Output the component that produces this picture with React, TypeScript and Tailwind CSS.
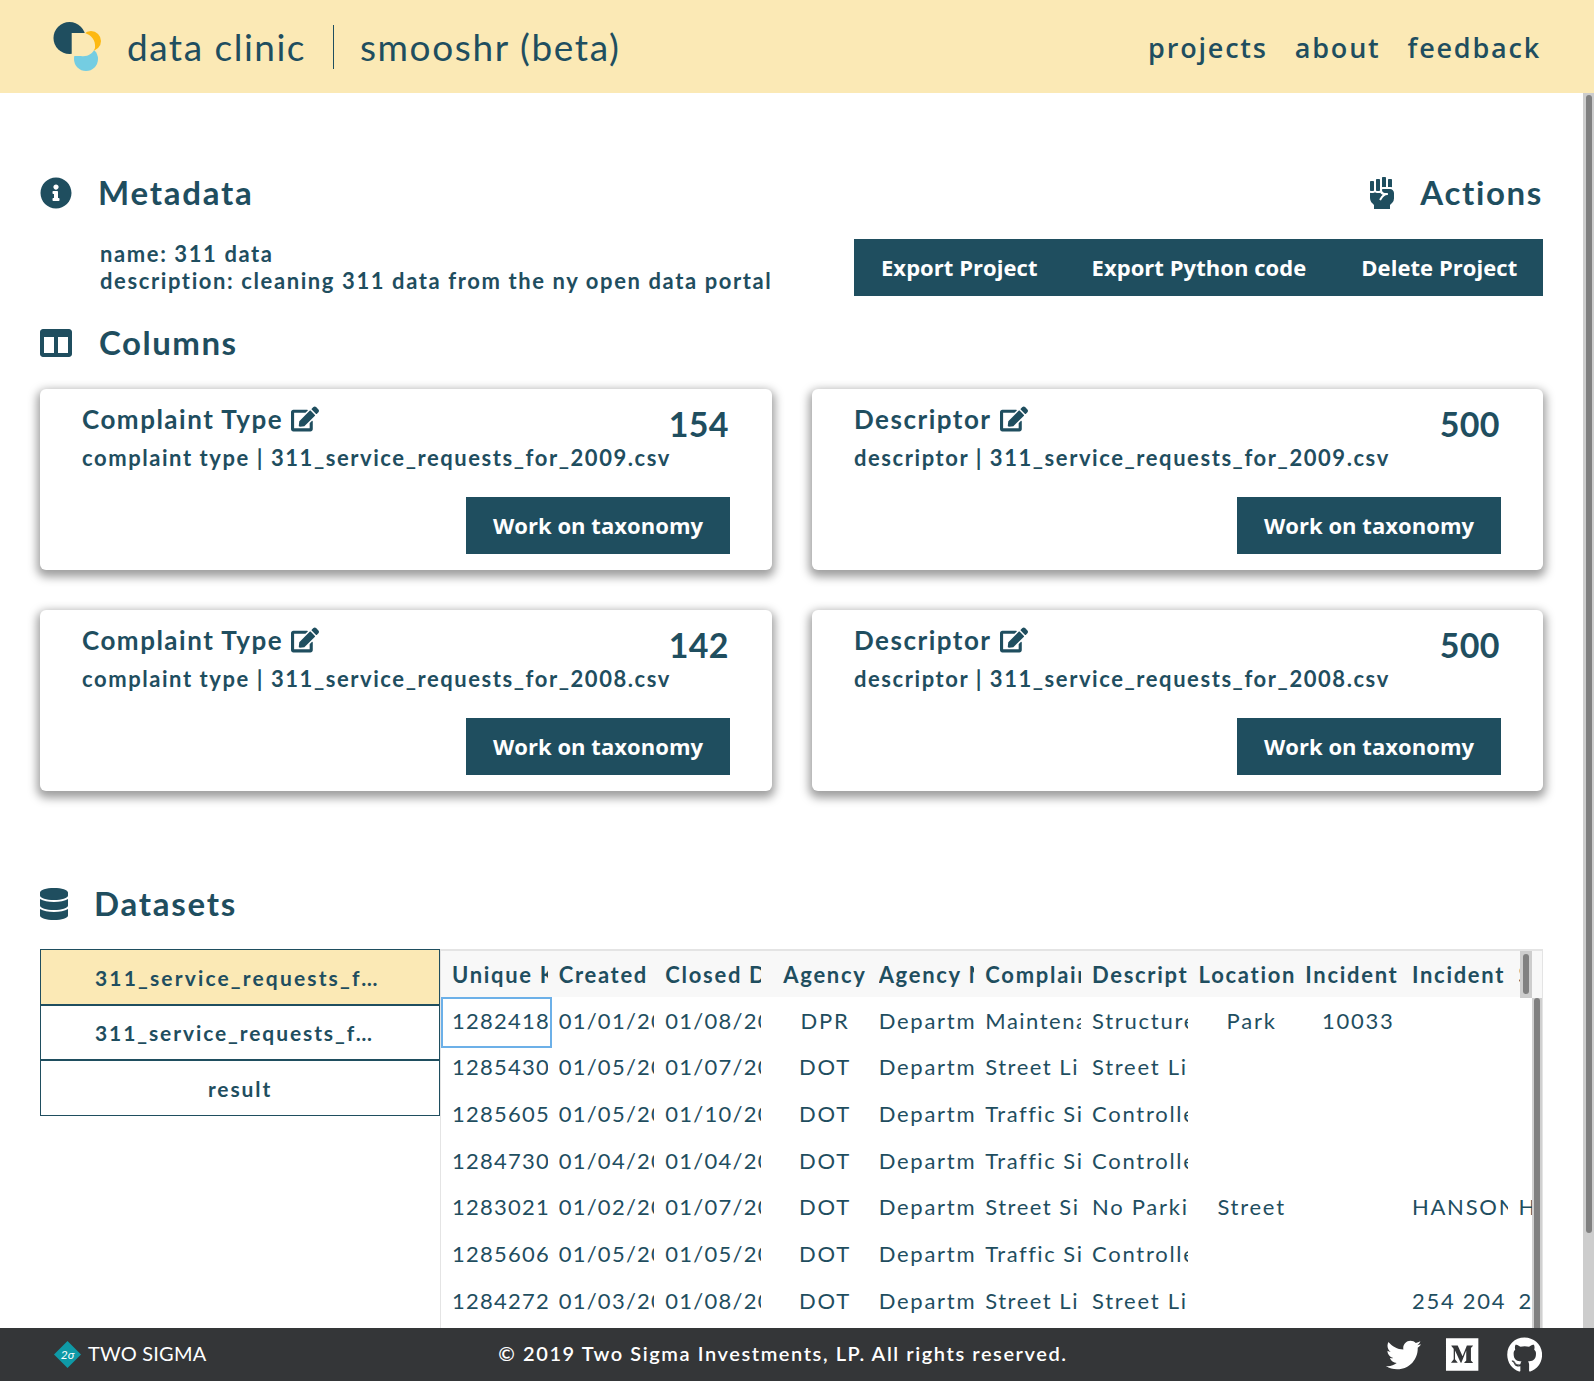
import React from "react";
import { FaInfoCircle, FaColumns, FaDatabase, FaFistRaised, FaEdit, FaTwitter, FaMedium, FaGithub } from "react-icons/fa";

function Logo() {
  return (
    <svg width="52" height="54" viewBox="50 20 52 54" className="shrink-0">
      <circle cx="85" cy="59" r="12" fill="#74cde2" />
      <circle cx="90" cy="41" r="10" fill="#fdb913" />
      <circle cx="68.5" cy="38" r="16" fill="#1f4e5f" />
      <path d="M70.7 33 H84 C90 35 95 40 94 48 C92 54 86 57 80 56 H70.7 Z" fill="#fbe9b5" />
    </svg>
  );
}

function Btn({ children, className = "" }: { children: React.ReactNode; className?: string }) {
  return (
    <div className={`font-['Open_Sans',sans-serif] bg-[#1f4e5f] text-white font-bold text-[22px] tracking-[0.05px] h-[57px] flex items-center ${className}`}>
      {children}
    </div>
  );
}

function Card({ title, count, sub }: { title: string; count: string; sub: string }) {
  return (
    <div className="h-[181px] rounded-md bg-white shadow-[0_4px_10px_3px_rgba(0,0,0,0.38)] pl-[42px] pr-[42px] flex flex-col">
      <div className="flex justify-between items-start h-[63px]">
        <div className="flex items-center gap-[8px] pt-[15px]">
          <span className="text-[26px] leading-[30px] font-bold tracking-[1.5px]">{title}</span>
          <FaEdit className="text-[28px]" />
        </div>
        <span className="text-[34px] leading-[40px] font-bold pt-[15px] pr-[1px] tracking-[0.4px]">{count}</span>
      </div>
      <div className="text-[22px] leading-[26px] font-bold tracking-[1.56px] -mt-[7px]">{sub}</div>
      <div className="flex justify-end mt-[26px]">
        <Btn className="w-[264px] justify-center">Work on taxonomy</Btn>
      </div>
    </div>
  );
}

const cols = ["Unique K", "Created", "Closed D", "Agency", "Agency N", "Complaint", "Descriptor", "Location", "Incident", "Incident", "Street"];
const centered = [3, 7, 8];
const rows: string[][] = [
  ["12824189", "01/01/2009", "01/08/2009", "DPR", "Department", "Maintenance", "Structure", "Park", "10033", "", ""],
  ["12854300", "01/05/2009", "01/07/2009", "DOT", "Department", "Street Li", "Street Li", "", "", "", ""],
  ["12856055", "01/05/2009", "01/10/2009", "DOT", "Department", "Traffic Si", "Controller", "", "", "", ""],
  ["12847300", "01/04/2009", "01/04/2009", "DOT", "Department", "Traffic Si", "Controller", "", "", "", ""],
  ["12830211", "01/02/2009", "01/07/2009", "DOT", "Department", "Street Si", "No Parki", "Street", "", "HANSON PL", "HANSON"],
  ["12856066", "01/05/2009", "01/05/2009", "DOT", "Department", "Traffic Si", "Controller", "", "", "", ""],
  ["12842722", "01/03/2009", "01/08/2009", "DOT", "Department", "Street Li", "Street Li", "", "", "254 204", "254 204"],
];

function Cell({ text, i, head }: { text: string; i: number; head?: boolean }) {
  const center = centered.includes(i) && (!head || i === 3);
  const digits = !head && i < 3;
  const tight = !head && i === 5;
  return (
    <div className="w-[106.67px] shrink-0 pl-[11px] overflow-hidden whitespace-nowrap">
      <div className={`overflow-hidden w-[96px] ${digits ? "tracking-[1.25px]" : ""} ${tight ? "tracking-[1.5px]" : ""} ${center ? "text-center pl-[10px]" : ""}`}>{text}</div>
    </div>
  );
}

export default function App() {
  return (
    <div className="font-['Lato',sans-serif] relative h-[1381px] w-[1594px] overflow-hidden flex flex-col text-[#1f4e5f] bg-white">
      <header className="h-[93px] shrink-0 bg-[#fbe9b5] flex items-center justify-between pl-[51px] pr-[53px]">
        <div className="flex items-center">
          <Logo />
          <span className="ml-[24px] text-[37px] tracking-[1.5px]">data clinic</span>
          <span className="w-px h-[44px] bg-[#1f4e5f] ml-[27px] mr-[26px]" />
          <span className="text-[37px] tracking-[1.6px]">smooshr (beta)</span>
        </div>
        <nav className="font-['Open_Sans',sans-serif] flex gap-[27px] text-[27px] font-semibold tracking-[1.8px] pt-[3px]">
          <span>projects</span>
          <span>about</span>
          <span>feedback</span>
        </nav>
      </header>

      <main className="flex-1 min-h-0 pl-[40px] pr-[51px] pt-[84px] overflow-hidden">
        <div className="flex justify-between h-[147px]">
          <div>
            <div className="flex items-center h-[32px]">
              <FaInfoCircle className="text-[32px] w-[32px]" />
              <span className="ml-[26px] text-[33px] font-bold tracking-[1.75px]">Metadata</span>
            </div>
            <div className="ml-[60px] mt-[31px] text-[22px] leading-[27px] font-bold tracking-[1.6px]">
              <div>name: 311 data</div>
              <div>description: cleaning 311 data from the ny open data portal</div>
            </div>
          </div>
          <div className="flex flex-col items-end">
            <div className="flex items-center h-[32px]">
              <FaFistRaised className="text-[32px]" />
              <span className="ml-[22px] text-[33px] font-bold tracking-[1.65px]">Actions</span>
            </div>
            <Btn className="mt-[30px] w-[689px] pl-[27px]">
              <span>Export Project</span>
              <span className="ml-[54px]">Export Python code</span>
              <span className="ml-[55px]">Delete Project</span>
            </Btn>
          </div>
        </div>

        <div className="flex items-center h-[32px] mt-[3px]">
          <FaColumns className="text-[32px]" />
          <span className="ml-[27px] text-[33px] font-bold tracking-[1.5px]">Columns</span>
        </div>

        <div className="grid grid-cols-[732px_731px] gap-x-[40px] gap-y-[40px] mt-[30px]">
          <Card title="Complaint Type" count="154" sub="complaint type | 311_service_requests_for_2009.csv" />
          <Card title="Descriptor" count="500" sub="descriptor | 311_service_requests_for_2009.csv" />
          <Card title="Complaint Type" count="142" sub="complaint type | 311_service_requests_for_2008.csv" />
          <Card title="Descriptor" count="500" sub="descriptor | 311_service_requests_for_2008.csv" />
        </div>

        <div className="flex items-center h-[32px] mt-[97px]">
          <FaDatabase className="text-[32px] w-[28px]" />
          <span className="ml-[26px] text-[33px] font-bold tracking-[1.75px]">Datasets</span>
        </div>

        <div className="flex mt-[29px]">
          <div className="w-[400px] shrink-0 text-[21px] tracking-[1.9px] text-center">
            <div className="h-[57px] bg-[#fbe9b5] border border-[#1f4e5f] border-b-2 flex items-center pl-[54px] pt-[1px] font-bold tracking-[2.15px]">311_service_requests_f…</div>
            <div className="h-[55px] border-x border-[#1f4e5f] border-b-2 flex items-center pl-[54px] font-bold">311_service_requests_f…</div>
            <div className="h-[55px] border-x border-b border-[#1f4e5f] flex items-center justify-center pt-[1px] font-bold">result</div>
          </div>
          <div className="relative w-[1103px] h-[400px] border-t-2 border-l border-r border-[#e4e4e4] overflow-hidden">
            <div className="w-[1091px] overflow-hidden">
              <div className="flex bg-[#f8f8f8] h-[46px] items-center text-[22px] font-bold tracking-[1.7px] w-[1180px]">
                {cols.map((c, i) => (
                  <Cell key={i} text={c} i={i} head />
                ))}
              </div>
              {rows.map((r, ri) => (
                <div key={ri} className="flex h-[46.65px] items-center text-[22px] tracking-[1.75px] w-[1180px]">
                  {r.map((c, i) => (
                    <Cell key={i} text={c} i={i} />
                  ))}
                </div>
              ))}
            </div>
            <div className="absolute left-0 top-[46px] w-[111px] h-[51px] border-2 border-[#6cb0e8]" />
            <div className="absolute right-0 top-0 w-[11px] h-[47px] bg-[#f8f8f8]" />
            <div className="absolute right-[10px] top-0 w-[12px] h-[47px] bg-[#cdcdcd] flex justify-center pt-[3px]">
              <div className="w-[6px] h-[40px] rounded bg-[#808080]" />
            </div>
            <div className="absolute right-0 top-[47px] w-[10px] bottom-0 bg-[#d0d0d0] pl-[2px]">
              <div className="w-[6px] h-full rounded bg-[#808080]" />
            </div>
          </div>
        </div>
      </main>

      <footer className="absolute left-0 bottom-0 w-full h-[53px] bg-[#343638] text-white flex items-center justify-between pl-[54px] pr-[52px]">
        <div className="flex items-center w-[300px]">
          <svg width="27" height="27" viewBox="0 0 27 27">
            <path d="M13.5 0 L27 13.5 L13.5 27 L0 13.5 Z" fill="#0f9aa7" />
            <text x="13.5" y="18" textAnchor="middle" fontSize="12" fontStyle="italic" fill="#fff">2σ</text>
          </svg>
          <span className="ml-[7px] text-[20px] tracking-[0.2px] -mt-[3px]">TWO SIGMA</span>
        </div>
        <span className="text-[20px] font-semibold tracking-[1.58px] -ml-[174px] -mt-[3px]">© 2019 Two Sigma Investments, LP. All rights reserved.</span>
        <div className="flex items-center w-[156px]">
          <FaTwitter className="text-[36px]" />
          <FaMedium className="text-[37px] ml-[23px]" />
          <FaGithub className="text-[36px] ml-[26px]" />
        </div>
      </footer>

      <div className="absolute right-0 top-[93px] w-[11px] h-[1235px] bg-[#cdcdcd] pl-[3px] pt-[2px]">
        <div className="w-[6px] h-[1138px] rounded bg-[#808080]" />
      </div>
    </div>
  );
}
